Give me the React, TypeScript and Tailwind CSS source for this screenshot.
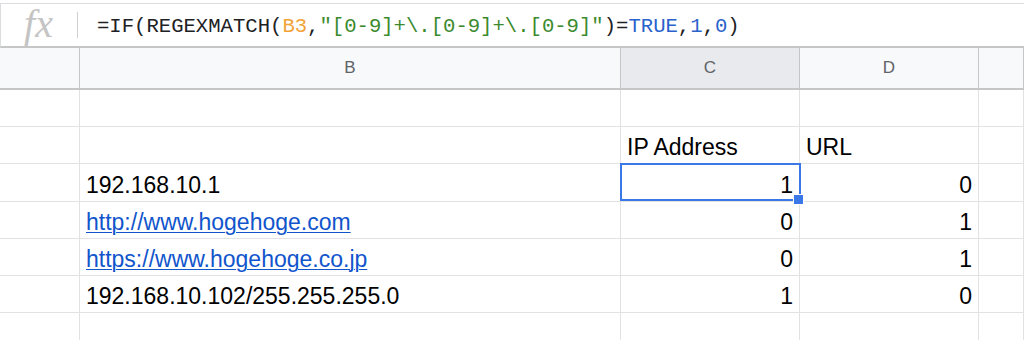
import React from "react";

const cols = [
  { key: "A", w: "w-[80px]" },
  { key: "B", w: "w-[541px]" },
  { key: "C", w: "w-[179px]" },
  { key: "D", w: "w-[179px]" },
  { key: "E", w: "flex-1" },
];

type Cell = { text?: string; link?: boolean; right?: boolean };

const rows: Cell[][] = [
  [{}, {}, {}, {}, {}],
  [{}, {}, { text: "IP Address" }, { text: "URL" }, {}],
  [{}, { text: "192.168.10.1" }, { text: "1", right: true }, { text: "0", right: true }, {}],
  [{}, { text: "http://www.hogehoge.com", link: true }, { text: "0", right: true }, { text: "1", right: true }, {}],
  [{}, { text: "https://www.hogehoge.co.jp", link: true }, { text: "0", right: true }, { text: "1", right: true }, {}],
  [{}, { text: "192.168.10.102/255.255.255.0" }, { text: "1", right: true }, { text: "0", right: true }, {}],
  [{}, {}, {}, {}, {}],
  [{}, {}, {}, {}, {}],
];

const FormulaBar = () => (
  <div className="h-[48px] pt-[3px] bg-white">
    <div className="h-full flex items-center border-t border-l border-b-2 border-[#dadce0] border-b-[#c4c7c5]">
      <div className="w-[76px] h-full flex items-center justify-center pr-[1px]">
        <span
          className="block text-[40px] italic text-[#c4c4c4] leading-[40px] -mt-[3px]"
          style={{ fontFamily: '"Liberation Serif", serif' }}
        >
          fx
        </span>
      </div>
      <div className="w-px h-[26px] bg-[#d0d0d0]" />
      <div className="pl-[19px] text-[20.6px] text-[#202124] pt-[5px]" style={{ fontFamily: '"Liberation Mono", monospace' }}>
        =IF(REGEXMATCH(<span className="text-[#f2a33a]">B3</span>,
        <span className="text-[#3c8a2e]">"[0-9]+\.[0-9]+\.[0-9]"</span>)=
        <span className="text-[#2a62cc]">TRUE</span>,<span className="text-[#2a62cc]">1</span>,
        <span className="text-[#2a62cc]">0</span>)
      </div>
    </div>
  </div>
);

export default function App() {
  return (
    <div className="w-[1024px] h-[340px] overflow-hidden bg-white" style={{ fontFamily: '"Liberation Sans", Arial, sans-serif' }}>
      <FormulaBar />
      <div className="flex h-[42px] border-b-2 border-[#c4c7c5]">
        {cols.map((c) => (
          <div
            key={c.key}
            className={`${c.w} flex items-center justify-center border-r border-[#c4c7c5] text-[17px] text-[#5f6368] ${
              c.key === "C" ? "bg-[#e8eaed]" : "bg-[#f8f9fa]"
            }`}
          >
            {c.key === "A" || c.key === "E" ? "" : c.key}
          </div>
        ))}
      </div>
      <div className="relative">
        {rows.map((r, i) => (
          <div key={i} className="flex h-[37.2px] border-b border-[#e2e2e3]">
            {r.map((cell, j) => (
              <div
                key={j}
                className={`${cols[j].w} flex items-end pb-[3px] px-[6px] border-r border-[#e2e2e3] text-[23px] leading-[26px] text-black ${
                  cell.right ? "justify-end" : "justify-start"
                }`}
              >
                {cell.text && (
                  <span className={cell.link ? "text-[#1155cc] underline decoration-1 underline-offset-[2px]" : ""}>
                    {cell.text}
                  </span>
                )}
              </div>
            ))}
          </div>
        ))}
        <div className="absolute left-[620px] top-[73px] w-[181px] h-[38px] border-2 border-[#3b78e7]" />
        <div className="absolute left-[793px] top-[104px] w-[11px] h-[11px] bg-[#3b78e7] border border-white" />
      </div>
    </div>
  );
}
